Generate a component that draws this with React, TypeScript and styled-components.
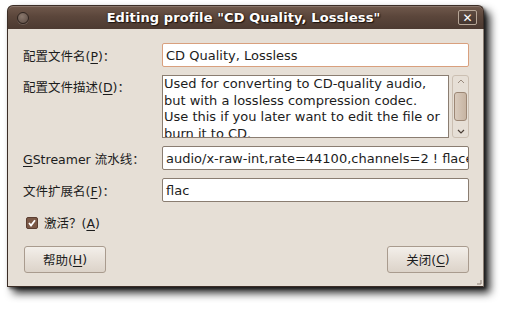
import React from "react";
import styled, { createGlobalStyle } from "styled-components";

const GlobalStyle = createGlobalStyle`
  html, body {
    margin: 0;
    padding: 0;
    background: #ffffff;
  }
  body {
    font-family: "DejaVu Sans", "Noto Sans CJK SC", sans-serif;
    font-size: 12px;
    color: #1c1c1c;
  }
`;

const Page = styled.div`
  width: 508px;
  height: 312px;
  padding: 5px 0 0 7px;
  box-sizing: border-box;
`;

const Window = styled.div`
  width: 477px;
  height: 282px;
  display: flex;
  flex-direction: column;
  border-radius: 6px 6px 0 0;
  box-shadow: 6px 6px 9px rgba(0, 0, 0, 0.85), 2px 2px 3px rgba(0, 0, 0, 0.5);
  background: #e6dfd6;
`;

const TitleBar = styled.div`
  height: 24px;
  flex: none;
  display: flex;
  align-items: center;
  padding: 0 6px 0 9px;
  border-radius: 6px 6px 0 0;
  background: linear-gradient(#70594c, #5b463b 45%, #4c3a31);
  border: 1px solid #3b2d26;
  border-bottom: none;
  box-shadow: inset 0 1px 0 rgba(255, 255, 255, 0.18);
  box-sizing: border-box;
`;

const MenuDot = styled.span`
  width: 10px;
  height: 10px;
  border-radius: 50%;
  flex: none;
  background: radial-gradient(circle at 40% 35%, #8a786d, #5a4a42);
  border: 1px solid #2e231e;
  box-shadow: 0 1px 0 rgba(255, 255, 255, 0.15);
`;

const Title = styled.div`
  flex: 1;
  text-align: center;
  font-weight: bold;
  font-size: 13px;
  color: #ffffff;
  text-shadow: 1px 1px 1px #1e140f, 0 0 2px #2a1d16;
  letter-spacing: 0.1px;
  white-space: nowrap;
`;

const CloseButton = styled.span`
  width: 19px;
  height: 15px;
  flex: none;
  display: flex;
  align-items: center;
  justify-content: center;
  border: 1px solid #b7a697;
  border-radius: 2px;
  box-sizing: border-box;
  background: linear-gradient(#5e4b41, #44352e);
  color: #ffffff;
  font-weight: bold;
  font-size: 12px;
  line-height: 1;
`;

const Body = styled.div`
  flex: 1;
  position: relative;
  display: flex;
  flex-direction: column;
  padding: 14px 15px 13px 15px;
  border: 1px solid #3b2d26;
  border-top: none;
  border-right-color: #8c7f74;
`;

const Form = styled.div`
  display: grid;
  grid-template-columns: 139px 307px;
  row-gap: 8px;
  align-items: center;
`;

const Label = styled.label<{ $top?: boolean }>`
  align-self: ${(p) => (p.$top ? "start" : "center")};
  padding-top: ${(p) => (p.$top ? "2px" : "0")};
  font-size: 12.5px;
  white-space: nowrap;
`;

const Key = styled.u`
  text-underline-offset: 2px;
`;

const Entry = styled.div<{ $focus?: boolean }>`
  height: 24px;
  box-sizing: border-box;
  display: flex;
  align-items: center;
  padding: 0 3px;
  background: #ffffff;
  border: 1px solid ${(p) => (p.$focus ? "#d9a07e" : "#8a7d71")};
  border-radius: 2px;
  font-size: 13px;
  white-space: nowrap;
  overflow: hidden;
`;

const TextArea = styled.div`
  display: flex;
  gap: 3px;
  height: 63px;
`;

const TextBox = styled.div`
  flex: 1;
  box-sizing: border-box;
  border: 1px solid #8a7d71;
  background: #ffffff;
  padding: 0 1px;
  font-size: 13px;
  line-height: 16.7px;
  white-space: nowrap;
  overflow: hidden;
`;

const Scrollbar = styled.div`
  width: 17px;
  box-sizing: border-box;
  border: 1px solid #cbbfb2;
  border-radius: 3px;
  display: flex;
  flex-direction: column;
  align-items: center;
  justify-content: space-between;
  padding: 3px 1px;
`;

const Arrow = styled.svg`
  width: 8px;
  height: 5px;
  flex: none;
`;

const Thumb = styled.div`
  width: 13px;
  height: 29px;
  box-sizing: border-box;
  border: 1px solid #9c8775;
  border-radius: 3px;
  background: linear-gradient(90deg, #d9cbbd, #c7b4a2);
`;

const CheckRow = styled.div`
  display: flex;
  align-items: center;
  gap: 6px;
  margin: 11px 0 0 3px;
  font-size: 12.5px;
`;

const CheckBox = styled.span`
  width: 12px;
  height: 12px;
  border-radius: 2px;
  background: #7b5846;
  border: 1px solid #5b3e31;
  box-sizing: border-box;
  display: flex;
  align-items: center;
  justify-content: center;
`;

const Buttons = styled.div`
  display: flex;
  justify-content: space-between;
  margin-top: auto;
  padding-left: 1px;
  width: 445px;
`;

const Button = styled.div`
  width: 82px;
  height: 27px;
  box-sizing: border-box;
  border: 1px solid #a99b8e;
  border-radius: 3px;
  background: linear-gradient(#f3efea, #e6dfd7 55%, #dcd3c9);
  display: flex;
  align-items: center;
  justify-content: center;
  font-size: 12.5px;
`;

const Grip = styled.svg`
  position: absolute;
  right: 1px;
  bottom: 1px;
  width: 5px;
  height: 5px;
`;

const description = [
  "Used for converting to CD-quality audio,",
  "but with a lossless compression codec.",
  "Use this if you later want to edit the file or",
  "burn it to CD.",
];

export default function App() {
  return (
    <Page>
      <GlobalStyle />
      <Window>
        <TitleBar>
          <MenuDot />
          <Title>Editing profile "CD Quality, Lossless"</Title>
          <CloseButton>✕</CloseButton>
        </TitleBar>
        <Body>
          <Form>
            <Label>
              配置文件名(<Key>P</Key>)：
            </Label>
            <Entry $focus>CD Quality, Lossless</Entry>
            <Label $top>
              配置文件描述(<Key>D</Key>)：
            </Label>
            <TextArea>
              <TextBox>
                {description.map((line) => (
                  <div key={line}>{line}</div>
                ))}
              </TextBox>
              <Scrollbar>
                <Arrow viewBox="0 0 8 5">
                  <path d="M1 4 L4 1 L7 4" fill="none" stroke="#9a8b7e" strokeWidth="1" />
                </Arrow>
                <Thumb />
                <Arrow viewBox="0 0 8 5">
                  <path d="M1 1 L4 4 L7 1" fill="none" stroke="#4a3e36" strokeWidth="1.2" />
                </Arrow>
              </Scrollbar>
            </TextArea>
            <Label>
              <Key>G</Key>Streamer 流水线：
            </Label>
            <Entry>audio/x-raw-int,rate=44100,channels=2 ! flacenc name=enc</Entry>
            <Label>
              文件扩展名(<Key>F</Key>)：
            </Label>
            <Entry>flac</Entry>
          </Form>
          <CheckRow>
            <CheckBox>
              <svg width="10" height="10" viewBox="0 0 10 10">
                <path d="M2 5 L4 7.5 L8 2.2" fill="none" stroke="#ffffff" strokeWidth="1.8" />
              </svg>
            </CheckBox>
            <span>
              激活？(<Key>A</Key>)
            </span>
          </CheckRow>
          <Buttons>
            <Button>
              帮助(<Key>H</Key>)
            </Button>
            <Button>
              关闭(<Key>C</Key>)
            </Button>
          </Buttons>
          <Grip viewBox="0 0 5 5">
            <path d="M4 0 V4 H0" fill="none" stroke="#8c7f74" strokeWidth="1" />
          </Grip>
        </Body>
      </Window>
    </Page>
  );
}
